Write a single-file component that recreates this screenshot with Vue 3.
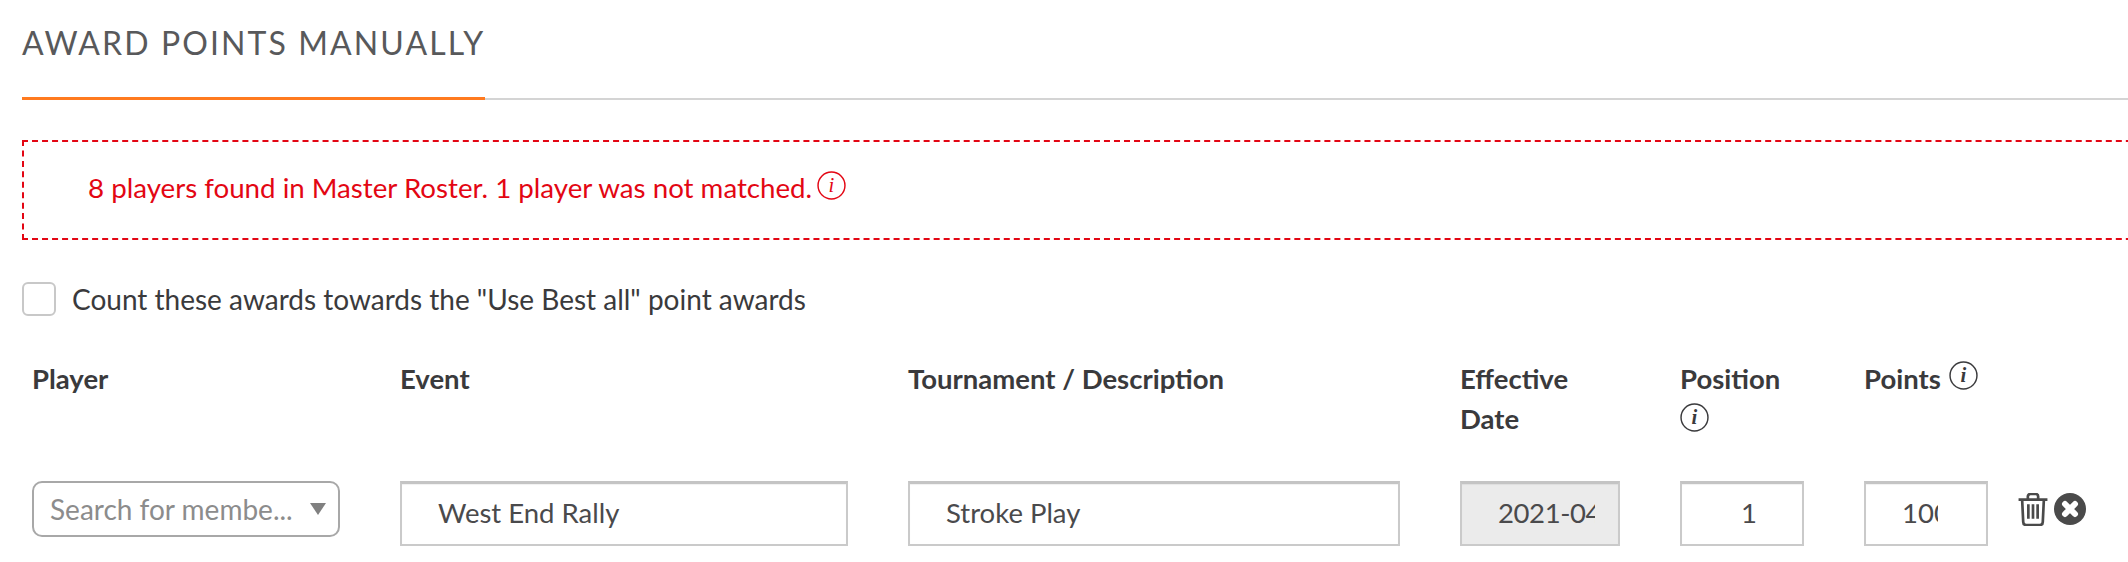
<template>
  <div class="page">
    <h2 class="title-bar"><span class="title-text">AWARD POINTS MANUALLY</span></h2>

    <div class="notice">
      <span>8 players found in Master Roster. 1 player was not matched.</span>
      <svg class="info info-red" viewBox="0 0 28 28"><circle cx="14" cy="14" r="13" /><text x="14" y="20" text-anchor="middle">i</text></svg>
    </div>

    <label class="check-row">
      <span class="check-box"></span>
      <span>Count these awards towards the "Use Best all" point awards</span>
    </label>

    <div class="award-grid">
      <div class="head">Player</div>
      <div class="head">Event</div>
      <div class="head">Tournament / Description</div>
      <div class="head head-date">Effective Date</div>
      <div class="head head-pos">
        Position
        <svg class="info" viewBox="0 0 28 28"><circle cx="14" cy="14" r="13" /><text x="14" y="20" text-anchor="middle">i</text></svg>
      </div>
      <div class="head">
        Points
        <svg class="info" viewBox="0 0 28 28"><circle cx="14" cy="14" r="13" /><text x="14" y="20" text-anchor="middle">i</text></svg>
      </div>
      <div class="head"></div>

      <div class="cell">
        <div class="member-select">
          <span class="placeholder">Search for membe...</span>
          <span class="caret"></span>
        </div>
      </div>
      <div class="cell"><input class="field field-event" value="West End Rally" /></div>
      <div class="cell"><input class="field field-tourn" value="Stroke Play" /></div>
      <div class="cell"><input class="field field-date" value="2021-04-12" readonly /></div>
      <div class="cell"><input class="field field-pos" value="1" /></div>
      <div class="cell"><input class="field field-pts" value="100" /></div>
      <div class="cell actions">
        <svg class="trash" viewBox="0 0 30 32">
          <path d="M1 6.500h28M10 6V3.500C10 2 11 1 12.500 1h5C19 1 20 2 20 3.500V6M4.500 7l1 21c0 1.800 1 3 3 3h13c2 0 3-1.200 3-3l1-21" />
          <path class="bars" d="M10.500 11v14M15 11v14M19.500 11v14" />
        </svg>
        <svg class="remove" viewBox="0 0 32 32">
          <circle cx="16" cy="16" r="16" />
          <path d="M11 11l10 10M21 11l-10 10" />
        </svg>
      </div>
    </div>
  </div>
</template>

<script setup>
</script>

<style>
html,
body {
  margin: 0;
  background: #fff;
  overflow: hidden;
}
</style>

<style scoped>
.page {
  width: 2128px;
  height: 562px;
  box-sizing: border-box;
  padding-left: 22px;
  overflow: hidden;
  font-family: Lato, "Liberation Sans", sans-serif;
  color: #3a3a3c;
}

.title-bar {
  display: flex;
  margin: 0;
  height: 100px;
  box-sizing: border-box;
  border-bottom: 2px solid #d4d4d4;
}

.title-text {
  height: 100px;
  margin-bottom: -2px;
  box-sizing: border-box;
  padding: 23px 0 0;
  border-bottom: 3px solid #ff7a1f;
  font-size: 32px;
  line-height: 40px;
  font-weight: 400;
  letter-spacing: 2.1px;
  color: #58595b;
}

.notice {
  margin-top: 40px;
  width: 2200px;
  height: 100px;
  box-sizing: border-box;
  border: 2px dashed #e30613;
  padding: 0 0 5px 64px;
  display: flex;
  align-items: center;
  gap: 3px;
  font-size: 27.7px;
  color: #e30613;
}

.check-row {
  margin-top: 42px;
  display: flex;
  align-items: center;
  gap: 16px;
  height: 34px;
  font-size: 28px;
  color: #3a3a3c;
}

.check-box {
  width: 34px;
  height: 34px;
  box-sizing: border-box;
  border: 2px solid #c8c8c8;
  border-radius: 6px;
}

.award-grid {
  margin-top: 32px;
  display: grid;
  grid-template-columns: 368px 508px 552px 220px 184px 144px 120px;
  grid-template-rows: 133px auto;
}

.head {
  padding: 11px 10px 0;
  font-size: 27.5px;
  line-height: 40px;
  font-weight: 700;
  color: #3a3a3c;
}

.head-date {
  padding-right: 70px;
}

.head-pos {
  padding-right: 60px;
}

.cell {
  padding-left: 10px;
}

.info {
  width: 29px;
  height: 29px;
  margin-left: 2px;
  vertical-align: -1px;
  fill: none;
  stroke: #3a3a3c;
  stroke-width: 1.4;
}

.head-pos .info {
  margin-left: 0;
  vertical-align: -3px;
}

.info text {
  fill: #3a3a3c;
  stroke: none;
  font-family: "Liberation Serif", serif;
  font-style: italic;
  font-size: 20px;
}

.info-red {
  stroke: #e30613;
  flex: none;
  margin-top: -4px;
}

.info-red text {
  fill: #e30613;
}

.member-select {
  width: 308px;
  height: 56px;
  box-sizing: border-box;
  border: 2px solid #a8a8a8;
  border-radius: 10px;
  padding: 0 12px 0 16px;
  display: flex;
  align-items: center;
  justify-content: space-between;
  font-size: 28px;
}

.placeholder {
  color: #8c8c8c;
}

.caret {
  width: 0;
  height: 0;
  border-left: 8px solid transparent;
  border-right: 8px solid transparent;
  border-top: 12px solid #808080;
}

.field {
  display: block;
  height: 65px;
  box-sizing: border-box;
  border: 2px solid #cacaca;
  border-top-width: 3px;
  border-top-color: #c4c4c4;
  border-radius: 0;
  outline: none;
  background: #fff;
  box-shadow: inset 0 1px 1px rgba(0, 0, 0, 0.06);
  padding: 0 36px 4px;
  font-family: inherit;
  font-size: 27.5px;
  color: #4a4a4c;
}

.field-event {
  width: 448px;
}

.field-tourn {
  width: 492px;
}

.field-date {
  width: 160px;
  background: #ebebeb;
  padding-right: 23px;
  letter-spacing: -0.4px;
}

.field-pos {
  width: 124px;
  padding-left: 43px;
  padding-right: 29px;
  text-align: center;
}

.field-pts {
  width: 124px;
  padding-right: 48px;
}

.actions {
  display: flex;
  align-items: flex-start;
  gap: 5px;
  padding: 12px 0 0 19px;
}

.trash {
  width: 32px;
  height: 33px;
  fill: none;
  stroke: #4a4a4a;
  stroke-width: 2.6;
}

.trash .bars {
  stroke-width: 2.6;
}

.remove {
  width: 32px;
  height: 32px;
}

.remove circle {
  fill: #4a4a4a;
}

.remove path {
  fill: none;
  stroke: #fff;
  stroke-width: 6;
  stroke-linecap: round;
}
</style>
